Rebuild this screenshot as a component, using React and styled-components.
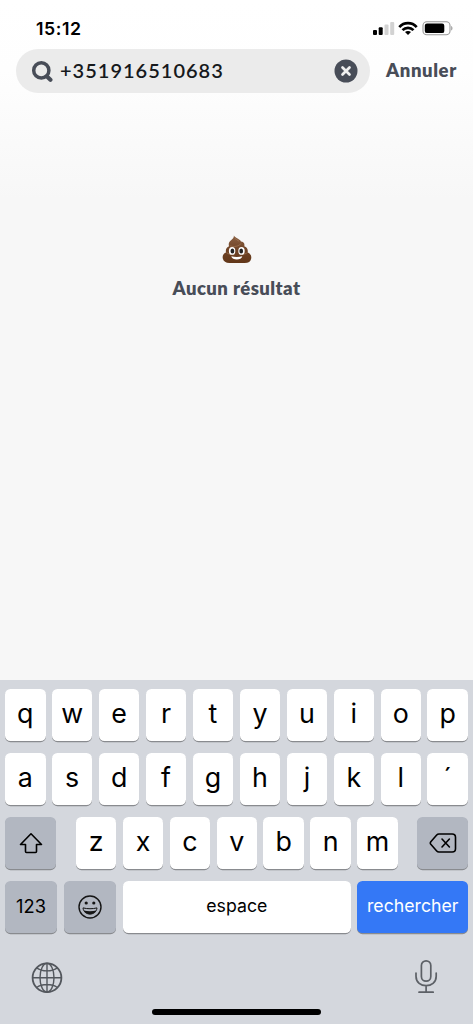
import React from 'react';
import styled, { createGlobalStyle } from 'styled-components';

const Global = createGlobalStyle`
  * { box-sizing: border-box; }
  body { margin: 0; background: #f7f7f7; }
  svg { display: block; flex: none; }
  button { border: 0; padding: 0; margin: 0; background: none; }
`;

const Screen = styled.main`
  width: 473px;
  height: 1024px;
  display: flex;
  flex-direction: column;
  overflow: hidden;
  background: linear-gradient(#ffffff 0, #fefefe 70px, #f7f7f7 200px);
  font-family: Inter, 'Liberation Sans', sans-serif;
`;

const StatusBar = styled.header`
  height: 49px;
  padding: 17px 19px 0 36px;
  display: flex;
  justify-content: space-between;
`;

const Time = styled.span`
  font-size: 17.7px;
  line-height: 23px;
  font-weight: 600;
  letter-spacing: 0.6px;
  color: #000;
`;

const StatusIcons = styled.div`
  display: flex;
  padding-top: 4px;
`;

const SearchRow = styled.div`
  height: 44px;
  padding-left: 16px;
  display: flex;
  align-items: center;
`;

const SearchField = styled.div`
  width: 354px;
  height: 44px;
  padding: 0 12px 0 15px;
  border-radius: 22px;
  background: #ebebeb;
  display: flex;
  align-items: center;
`;

const Query = styled.span`
  flex: 1;
  margin-left: 7px;
  padding-bottom: 2px;
  font: 600 20px/24px Lato, sans-serif;
  letter-spacing: 1px;
  color: #16191c;
`;

const Cancel = styled.button`
  margin-left: 16px;
  padding-bottom: 2px;
  font: 800 18.5px/24px Lato, sans-serif;
  letter-spacing: 0.6px;
  color: #484d58;
`;

const Results = styled.section`
  flex: 1;
  padding-top: 142px;
  display: flex;
  flex-direction: column;
  align-items: center;
`;

const EmptyText = styled.p`
  margin: 11px 0 0;
  font: 800 18.5px/24px Lato, sans-serif;
  letter-spacing: 0.42px;
  color: #484d58;
`;

const Keyboard = styled.section`
  height: 344px;
  padding: 9px 5px 0;
  background: #d4d7dd;
`;

const KeyRow = styled.div`
  display: flex;
  justify-content: space-between;
  height: 52px;
  margin-bottom: 12px;
`;

const Letters = styled.div`
  display: flex;
  gap: 6.4px;
  padding-left: 0.6px;
`;

const Key = styled.button`
  width: ${(p) => p.$w || 40.5}px;
  height: 51.5px;
  padding-bottom: ${(p) => (p.$icon ? 0 : p.$small ? 2.5 : 3)}px;
  display: flex;
  align-items: center;
  justify-content: center;
  border-radius: 5.5px;
  background: ${(p) => (p.$tone === 'blue' ? '#3478f6' : p.$tone === 'grey' ? '#b2b7c1' : '#fff')};
  color: ${(p) => (p.$tone === 'blue' ? '#fff' : '#000')};
  box-shadow: 0 1.2px 0 #898b8f;
  font-family: Inter, sans-serif;
  font-size: ${(p) => p.$size || (p.$small ? 17.7 : 26.8)}px;
  font-weight: 400;
`;

const Dock = styled.div`
  height: 64px;
  padding: 12px 25px 0 21px;
  display: flex;
  justify-content: space-between;
`;

const HomeBar = styled.div`
  width: 169px;
  height: 6px;
  margin: 0 auto;
  border-radius: 3px;
  background: #000;
`;

const Signal = () => (
  <svg width="24" height="18" viewBox="0 0 24 18">
    <rect x="0" y="9" width="4" height="5" rx="1" />
    <rect x="5.7" y="6.3" width="4" height="7.7" rx="1" />
    <rect x="11.5" y="3.4" width="4" height="10.6" rx="1" fill="#d2d2d2" />
    <rect x="17.2" y="1" width="4" height="13" rx="1" fill="#d2d2d2" />
  </svg>
);

const Wifi = () => (
  <svg width="22" height="18" viewBox="0 0 22 18" fill="none" stroke="#000" strokeWidth="2.7">
    <path d="M2.3 6.1C7 .9 15 .9 19.7 6.1" />
    <path d="M5.5 9.1C8.6 6 13.4 6 16.5 9.1" />
    <path d="M11 13.9 8 11.1C9.6 9.7 12.4 9.7 14 11.1Z" fill="#000" stroke="none" />
  </svg>
);

const Battery = () => (
  <svg width="35" height="18" viewBox="0 0 35 18">
    <rect x="4" y=".8" width="27" height="13" rx="3.8" fill="none" stroke="#999" strokeWidth="1.1" />
    <rect x="5.8" y="2.6" width="19.5" height="9.5" rx="2.2" />
    <path d="M32.2 5v4.6c1.7-.7 1.7-3.9 0-4.6Z" fill="#999" />
  </svg>
);

const SearchIcon = () => (
  <svg width="22" height="24" viewBox="0 0 22 24" fill="none" stroke="#484d58">
    <circle cx="10.3" cy="11.4" r="7.6" strokeWidth="3.5" />
    <path d="m16 17.5 3.4 3.2" strokeWidth="4.2" strokeLinecap="round" />
  </svg>
);

const ClearIcon = () => (
  <svg width="24" height="24" viewBox="0 0 24 24">
    <circle cx="12" cy="12" r="11.5" fill="#484d58" />
    <path d="m8.5 8.5 7 7m0-7-7 7" stroke="#f0f0f0" strokeWidth="2.7" strokeLinecap="round" />
  </svg>
);

const Poop = () => (
  <svg width="30" height="30" viewBox="0 0 30 30">
    <defs>
      <linearGradient id="brown" x1="0" y1="0" x2="0" y2="1">
        <stop offset="0" stopColor="#8a6043" />
        <stop offset=".5" stopColor="#714528" />
        <stop offset="1" stopColor="#623719" />
      </linearGradient>
    </defs>
    <path
      d="M11.8 .6c.7 2.8-3.6 4.3-4.7 7-.6 1.5-.4 2.6 0 3.7-2.3.9-3.8 3-3.1 6.1C1.3 18.3.2 20.7.8 23.5c.7 3.1 3 4.4 6.7 4.4h15.2c3.8 0 6-1.5 6.5-4.5.5-2.9-.9-5.1-3.5-6 .5-3-.7-5.2-3.4-6.1.7-2.9-.9-4.5-3.4-4.8-.8-2.4-4.3-2.4-7.1-5.9Z"
      fill="url(#brown)"
    />
    <path d="M8.3 10.8c3.6 1.5 8.4.5 11-2.4M4.6 17.7c3 2 5.5 2.3 8 2M19.5 19.4c2.7-.1 4.8-.8 6-1.9M12.8 3.2c1 1.2 2.8 1.9 4.3 3" stroke="#a37a59" strokeWidth=".7" fill="none" />
    <ellipse cx="10.1" cy="15.9" rx="3.2" ry="3.9" fill="#fff" />
    <ellipse cx="19.5" cy="15.9" rx="3.2" ry="3.9" fill="#fff" />
    <ellipse cx="10.4" cy="15.9" rx="1.9" ry="2.5" fill="#222" />
    <ellipse cx="19.2" cy="15.9" rx="1.9" ry="2.5" fill="#222" />
    <path d="M9.3 21.2c3.2 1 7.8 1 11 0-.8 4.3-10.2 4.3-11 0Z" fill="#fff" />
  </svg>
);

const ShiftIcon = () => (
  <svg width="26" height="24" viewBox="0 0 26 24" fill="none" stroke="#000" strokeWidth="1.6" strokeLinejoin="round">
    <path d="M13 2.8 2.5 13.5h5v7q0 1 1 1h9q1 0 1-1v-7h5Z" />
  </svg>
);

const DeleteIcon = () => (
  <svg width="28" height="22" viewBox="0 0 28 22" fill="none" stroke="#000" strokeWidth="1.6" strokeLinecap="round" strokeLinejoin="round">
    <path d="M10 2h13.2q3.3 0 3.3 3.3v11.4q0 3.3-3.3 3.3H10q-1.4 0-2.3-1L1.8 12.3q-1-1.3 0-2.6L7.7 3Q8.6 2 10 2Z" />
    <path d="m13 7 7.4 8m0-8L13 15" />
  </svg>
);

const SmileIcon = () => (
  <svg width="26" height="26" viewBox="0 0 26 26" fill="none" stroke="#151515" strokeWidth="1.4">
    <circle cx="13" cy="13" r="11" />
    <circle cx="9.2" cy="9" r="1.6" fill="#151515" stroke="none" />
    <circle cx="16.8" cy="9" r="1.6" fill="#151515" stroke="none" />
    <path d="M6 13.9c4.4 1.1 9.6 1.1 14 0-.8 8.2-13.2 8.2-14 0Z" strokeWidth="1" />
    <path d="M6.6 16.6c3.9 1 8.9 1 12.8 0-2.2 5-10.6 5-12.8 0Z" fill="#151515" stroke="none" />
  </svg>
);

const GlobeIcon = () => (
  <svg width="42" height="42" viewBox="0 0 42 42" fill="none" stroke="#53575d" strokeWidth="1.4">
    <circle cx="21" cy="20.7" r="14.4" strokeWidth="1.8" />
    <ellipse cx="21" cy="20.7" rx="7" ry="14.4" />
    <path d="M21 6.3v28.8M6.5 20.7h29M10.6 10.9c5.5 4 15.3 4 20.8 0M10.6 30.5c5.5-4 15.3-4 20.8 0" />
  </svg>
);

const MicIcon = () => (
  <svg width="34" height="42" viewBox="0 0 34 42" fill="none" stroke="#5c6066" strokeWidth="1.7" strokeLinecap="round">
    <rect x="12.4" y="3.8" width="9.4" height="20.4" rx="4.7" />
    <path d="M7 16.1v3.2c0 12.5 20.2 12.5 20.2 0v-3.2M17.1 29.1v6M10 35.2h14.2" />
  </svg>
);

export default function App() {
  return (
    <Screen>
      <Global />
      <StatusBar>
        <Time>15:12</Time>
        <StatusIcons>
          <Signal />
          <Wifi />
          <Battery />
        </StatusIcons>
      </StatusBar>
      <SearchRow>
        <SearchField>
          <SearchIcon />
          <Query>+351916510683</Query>
          <ClearIcon />
        </SearchField>
        <Cancel>Annuler</Cancel>
      </SearchRow>
      <Results>
        <Poop />
        <EmptyText>Aucun résultat</EmptyText>
      </Results>
      <Keyboard>
        <KeyRow>
          {[...'qwertyuiop'].map((c) => <Key key={c}>{c}</Key>)}
        </KeyRow>
        <KeyRow>
          {[...'asdfghjkl´'].map((c) => <Key key={c}>{c}</Key>)}
        </KeyRow>
        <KeyRow>
          <Key $w={51} $tone="grey" $icon><ShiftIcon /></Key>
          <Letters>
            {[...'zxcvbnm'].map((c) => <Key key={c}>{c}</Key>)}
          </Letters>
          <Key $w={51} $tone="grey" $icon><DeleteIcon /></Key>
        </KeyRow>
        <KeyRow>
          <Key $w={52} $tone="grey" $small $size={18.3}>123</Key>
          <Key $w={52.5} $tone="grey" $icon><SmileIcon /></Key>
          <Key $w={228} $small>espace</Key>
          <Key $w={110.5} $tone="blue" $small>rechercher</Key>
        </KeyRow>
        <Dock>
          <GlobeIcon />
          <MicIcon />
        </Dock>
        <HomeBar />
      </Keyboard>
    </Screen>
  );
}
